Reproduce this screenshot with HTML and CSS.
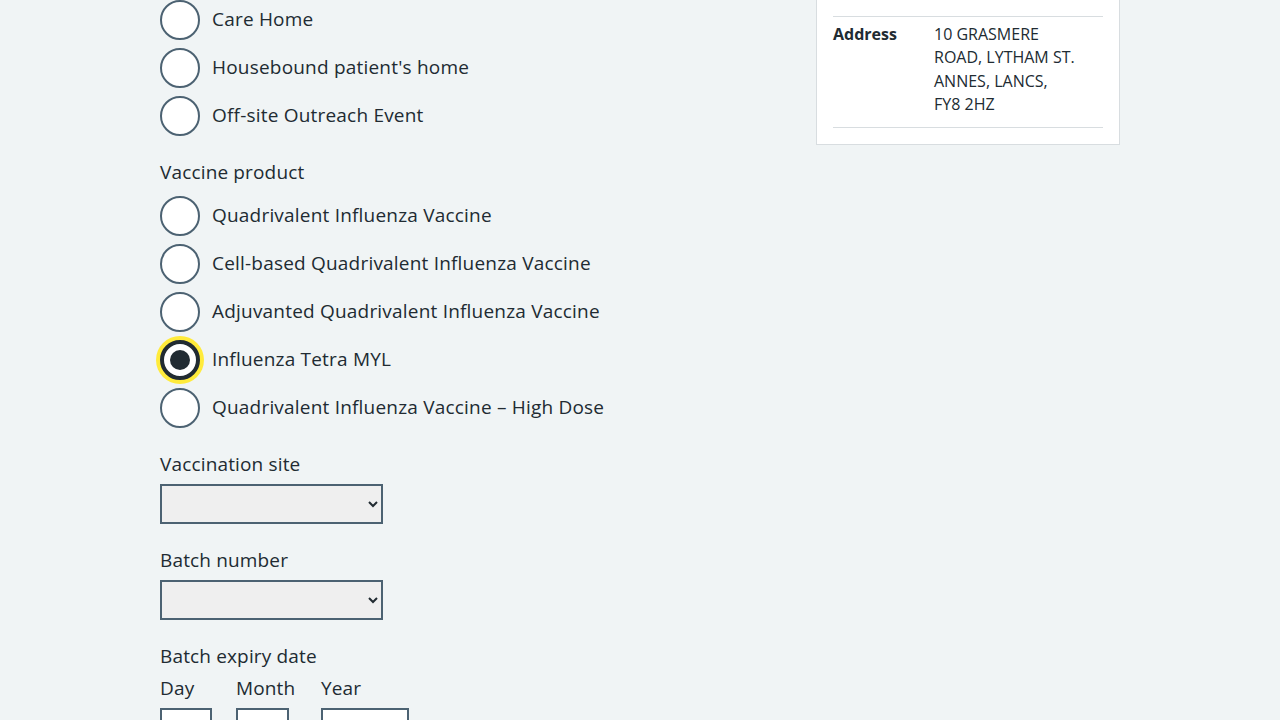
FILE: index.html
```html
<!DOCTYPE html>
<html lang="en">
<head>
<meta charset="utf-8">
<title>Record vaccination</title>
<link rel="stylesheet" href="styles.css">
</head>
<body>
<div class="page">
  <main class="main-col">
    <div class="radios">
      <div class="radio-item"><span class="radio-circle"></span><label class="radio-label">Care Home</label></div>
      <div class="radio-item"><span class="radio-circle"></span><label class="radio-label">Housebound patient's home</label></div>
      <div class="radio-item"><span class="radio-circle"></span><label class="radio-label">Off-site Outreach Event</label></div>
    </div>

    <fieldset class="form-group">
      <legend class="legend">Vaccine product</legend>
      <div class="radios">
        <div class="radio-item"><span class="radio-circle"></span><label class="radio-label">Quadrivalent Influenza Vaccine</label></div>
        <div class="radio-item"><span class="radio-circle"></span><label class="radio-label">Cell-based Quadrivalent Influenza Vaccine</label></div>
        <div class="radio-item"><span class="radio-circle"></span><label class="radio-label">Adjuvanted Quadrivalent Influenza Vaccine</label></div>
        <div class="radio-item"><span class="radio-circle is-checked"><span class="radio-dot"></span></span><label class="radio-label">Influenza Tetra MYL</label></div>
        <div class="radio-item"><span class="radio-circle"></span><label class="radio-label">Quadrivalent Influenza Vaccine – High Dose</label></div>
      </div>
    </fieldset>

    <div class="form-group">
      <label class="label" for="site">Vaccination site</label>
      <select class="select" id="site"><option></option></select>
    </div>

    <div class="form-group">
      <label class="label" for="batch">Batch number</label>
      <select class="select" id="batch"><option></option></select>
    </div>

    <fieldset class="form-group">
      <legend class="legend legend-date">Batch expiry date</legend>
      <div class="date-input">
        <div class="date-item">
          <label class="label">Day</label>
          <input class="input input-day" type="text">
        </div>
        <div class="date-item date-item-month">
          <label class="label">Month</label>
          <input class="input input-month" type="text">
        </div>
        <div class="date-item">
          <label class="label">Year</label>
          <input class="input input-year" type="text">
        </div>
      </div>
    </fieldset>
  </main>

  <aside class="side-col">
    <div class="card">
      <dl class="summary-list">
        <div class="summary-row">
          <dt class="summary-key">Address</dt>
          <dd class="summary-value">10 GRASMERE ROAD, LYTHAM ST. ANNES, LANCS, FY8 2HZ</dd>
        </div>
      </dl>
    </div>
  </aside>
</div>
</body>
</html>
```

FILE: styles.css
```css
* { box-sizing: border-box; }

html, body {
  margin: 0;
  padding: 0;
  background: #f0f4f5;
  color: #212b32;
  font-family: "Open Sans", "Noto Sans", Arial, sans-serif;
}

.page {
  width: 960px;
  margin: 0 auto;
  display: flex;
  align-items: flex-start;
}

.main-col {
  width: 640px;
  flex: 0 0 640px;
}

.side-col {
  width: 304px;
  margin-left: 16px;
}

fieldset {
  border: 0;
  margin: 0;
  padding: 0;
  min-width: 0;
}

.form-group {
  margin-top: 24px;
}

.legend {
  padding: 0 0 3px 0;
  font-size: 19px;
  line-height: 25px;
  letter-spacing: 0.15px;
  margin-bottom: 8px;
}

.legend-date {
  margin-bottom: 4px;
}

.label {
  display: block;
  font-size: 19px;
  line-height: 25px;
  letter-spacing: 0.15px;
  padding-bottom: 3px;
  margin-bottom: 4px;
}

.radios {
  display: flex;
  flex-direction: column;
  gap: 8px;
}

.radio-item {
  display: flex;
  align-items: flex-start;
  min-height: 40px;
}

.radio-circle {
  flex: 0 0 40px;
  width: 40px;
  height: 40px;
  border: 2px solid #4c6272;
  border-radius: 50%;
  background: #ffffff;
  display: flex;
  align-items: center;
  justify-content: center;
}

.radio-circle.is-checked {
  border: 4px solid #212b32;
  box-shadow: 0 0 0 4px #ffeb3b;
}

.radio-dot {
  width: 20px;
  height: 20px;
  border-radius: 50%;
  background: #212b32;
}

.radio-label {
  font-size: 19px;
  line-height: 28px;
  letter-spacing: 0.2px;
  padding: 5px 12px 7px 12px;
}

.select {
  display: block;
  width: 223px;
  height: 40px;
  border: 2px solid #4c6272;
  border-radius: 0;
  background: #efefef;
  color: #212b32;
  font-family: inherit;
  font-size: 19px;
  padding: 4px;
}

.date-input {
  display: flex;
  gap: 24px;
}

.date-item {
  display: flex;
  flex-direction: column;
  align-items: flex-start;
}

.date-item-month {
  min-width: 61px;
}

.input {
  display: block;
  height: 40px;
  border: 2px solid #4c6272;
  border-radius: 0;
  background: #ffffff;
  font-family: inherit;
  font-size: 19px;
  padding: 4px;
}

.input-day { width: 52px; }
.input-month { width: 53px; }
.input-year { width: 88px; }

.card {
  background: #ffffff;
  border: 1px solid #d8dde0;
  border-top: 0;
  padding: 16px;
}

.summary-list {
  margin: 0;
}

.summary-row {
  display: flex;
  border-top: 1px solid #d8dde0;
  border-bottom: 1px solid #d8dde0;
  padding: 6px 0 10px 0;
}

.summary-key {
  width: 101px;
  flex: 0 0 101px;
  font-weight: 700;
  font-size: 16px;
  line-height: 23.4px;
  margin: 0;
}

.summary-value {
  width: 143px;
  margin: 0;
  font-size: 16px;
  line-height: 23.4px;
}
```
